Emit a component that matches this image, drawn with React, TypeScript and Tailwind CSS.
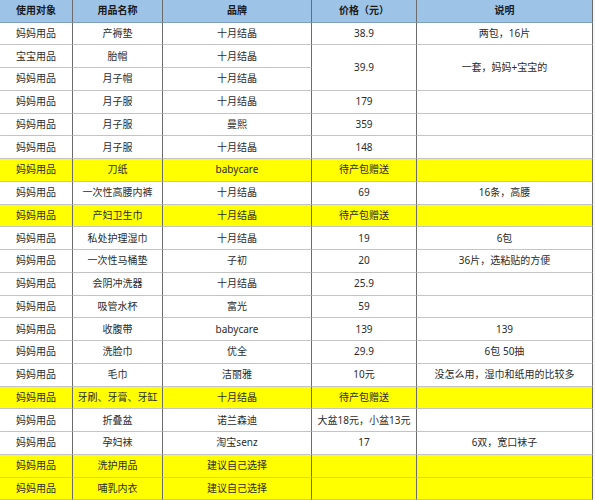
import clsx from "clsx";

type Row = {
  who: string;
  name: string;
  brand: string;
  price?: string;
  note?: string;
  hl?: boolean;
  // merged with the row below in price/note columns
  span?: boolean;
  // price/note covered by the row above
  covered?: boolean;
};

const rows: Row[] = [
  { who: "妈妈用品", name: "产褥垫", brand: "十月结晶", price: "38.9", note: "两包，16片" },
  { who: "宝宝用品", name: "胎帽", brand: "十月结晶", price: "39.9", note: "一套，妈妈+宝宝的", span: true },
  { who: "妈妈用品", name: "月子帽", brand: "十月结晶", covered: true },
  { who: "妈妈用品", name: "月子服", brand: "十月结晶", price: "179" },
  { who: "妈妈用品", name: "月子服", brand: "曼熙", price: "359" },
  { who: "妈妈用品", name: "月子服", brand: "十月结晶", price: "148" },
  { who: "妈妈用品", name: "刀纸", brand: "babycare", price: "待产包赠送", hl: true },
  { who: "妈妈用品", name: "一次性高腰内裤", brand: "十月结晶", price: "69", note: "16条，高腰" },
  { who: "妈妈用品", name: "产妇卫生巾", brand: "十月结晶", price: "待产包赠送", hl: true },
  { who: "妈妈用品", name: "私处护理湿巾", brand: "十月结晶", price: "19", note: "6包" },
  { who: "妈妈用品", name: "一次性马桶垫", brand: "子初", price: "20", note: "36片，选粘贴的方便" },
  { who: "妈妈用品", name: "会阴冲洗器", brand: "十月结晶", price: "25.9" },
  { who: "妈妈用品", name: "吸管水杯", brand: "富光", price: "59" },
  { who: "妈妈用品", name: "收腹带", brand: "babycare", price: "139", note: "139" },
  { who: "妈妈用品", name: "洗脸巾", brand: "优全", price: "29.9", note: "6包 50抽" },
  { who: "妈妈用品", name: "毛巾", brand: "洁丽雅", price: "10元", note: "没怎么用，湿巾和纸用的比较多" },
  { who: "妈妈用品", name: "牙刷、牙膏、牙缸", brand: "十月结晶", price: "待产包赠送", hl: true },
  { who: "妈妈用品", name: "折叠盆", brand: "诺兰森迪", price: "大盆18元，小盆13元" },
  { who: "妈妈用品", name: "孕妇袜", brand: "淘宝senz", price: "17", note: "6双，宽口袜子" },
  { who: "妈妈用品", name: "洗护用品", brand: "建议自己选择", hl: true },
  { who: "妈妈用品", name: "哺乳内衣", brand: "建议自己选择", hl: true },
];

const headers = ["使用对象", "用品名称", "品牌", "价格（元）", "说明"];

function Cell({
  children,
  hl,
  head,
  span,
}: {
  children?: React.ReactNode;
  hl?: boolean;
  head?: boolean;
  span?: boolean;
}) {
  return (
    <div
      className={clsx(
        "flex items-center justify-center whitespace-nowrap border-r border-b border-r-[#6b6b6b]",
        head ? "bg-[#9dc3e6] border-b-[#7f9fbf] font-bold text-[#1a1a1a]" : "border-b-[#c4c4c4]",
        !head && (hl ? "bg-[#ffff00]" : "bg-white"),
        span && "row-span-2"
      )}
    >
      {children}
    </div>
  );
}

export default function App() {
  return (
    <div
      className="w-[595px] h-[500px] overflow-hidden bg-[#f7f7f7] text-[10px] text-[#2b2b2b]"
      style={{ fontFamily: '"Noto Sans", "Noto Sans CJK SC", sans-serif' }}
    >
      <div className="grid w-[593px] grid-cols-[73px_90px_149px_105px_176px] grid-rows-[22.5px_repeat(21,22.75px)]">
        {headers.map((h) => (
          <Cell key={h} head>
            {h}
          </Cell>
        ))}
        {rows.map((r, i) => (
          <div key={i} className="contents">
            <Cell hl={r.hl}>{r.who}</Cell>
            <Cell hl={r.hl}>{r.name}</Cell>
            <Cell hl={r.hl}>{r.brand}</Cell>
            {!r.covered && (
              <>
                <Cell hl={r.hl} span={r.span}>
                  {r.price}
                </Cell>
                <Cell hl={r.hl} span={r.span}>
                  {r.note}
                </Cell>
              </>
            )}
          </div>
        ))}
      </div>
    </div>
  );
}
